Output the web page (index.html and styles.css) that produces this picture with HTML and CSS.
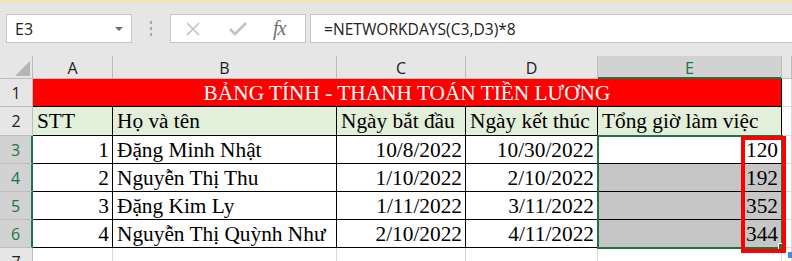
FILE: index.html
```html
<!DOCTYPE html>
<html lang="vi">
<head>
  <meta charset="UTF-8" />
  <title>Bảng tính</title>
  <link rel="stylesheet" href="styles.css">
</head>
<body>

  <div class="top-strip"></div>

  <div class="formula-bar">
    <div class="name-box">
      <span>E3</span>
      <span class="drop"></span>
    </div>
    <div class="grip"><i></i><i></i><i></i></div>
    <div class="fx-buttons">
      <svg class="ico-x" width="16" height="16" viewBox="0 0 16 16">
        <path d="M2 2 L14 14 M14 2 L2 14" stroke="#c2c2c2" stroke-width="1.6" fill="none"/>
      </svg>
      <svg class="ico-ok" width="18" height="14" viewBox="0 0 18 14">
        <path d="M1 7 L6 12 L17 1" stroke="#c2c2c2" stroke-width="2.8" fill="none"/>
      </svg>
      <span class="fx">fx</span>
    </div>
    <div class="formula-input">=NETWORKDAYS(C3,D3)*8</div>
  </div>

  <div class="sheet">
    <!-- column headers -->
    <div class="corner"><svg width="33" height="23" viewBox="0 0 33 23"><path d="M15 20 L30 20 L30 5 Z" fill="#b5b5b5"/></svg></div>
    <div class="col-head">A</div>
    <div class="col-head">B</div>
    <div class="col-head">C</div>
    <div class="col-head">D</div>
    <div class="col-head active">E</div>
    <div class="col-head"></div>

    <!-- row 1 -->
    <div class="row-head">1</div>
    <div class="cell title">BẢNG TÍNH - THANH TOÁN TIỀN LƯƠNG</div>
    <div class="cell empty"></div>

    <!-- row 2 -->
    <div class="row-head">2</div>
    <div class="cell head-cell">STT</div>
    <div class="cell head-cell">Họ và tên</div>
    <div class="cell head-cell">Ngày bắt đầu</div>
    <div class="cell head-cell">Ngày kết thúc</div>
    <div class="cell head-cell">Tổng giờ làm việc</div>
    <div class="cell empty"></div>

    <!-- row 3 -->
    <div class="row-head active">3</div>
    <div class="cell num">1</div>
    <div class="cell">Đặng Minh Nhật</div>
    <div class="cell num">10/8/2022</div>
    <div class="cell num">10/30/2022</div>
    <div class="cell num">120</div>
    <div class="cell empty"></div>

    <!-- row 4 -->
    <div class="row-head active">4</div>
    <div class="cell num">2</div>
    <div class="cell">Nguyễn Thị Thu</div>
    <div class="cell num">1/10/2022</div>
    <div class="cell num">2/10/2022</div>
    <div class="cell num sel">192</div>
    <div class="cell empty"></div>

    <!-- row 5 -->
    <div class="row-head active">5</div>
    <div class="cell num">3</div>
    <div class="cell">Đặng Kim Ly</div>
    <div class="cell num">1/11/2022</div>
    <div class="cell num">3/11/2022</div>
    <div class="cell num sel">352</div>
    <div class="cell empty"></div>

    <!-- row 6 -->
    <div class="row-head active">6</div>
    <div class="cell num">4</div>
    <div class="cell">Nguyễn Thị Quỳnh Như</div>
    <div class="cell num">2/10/2022</div>
    <div class="cell num">4/11/2022</div>
    <div class="cell num sel">344</div>
    <div class="cell empty"></div>

    <!-- row 7 -->
    <div class="row-head">7</div>
    <div class="cell empty"></div>
    <div class="cell empty"></div>
    <div class="cell empty"></div>
    <div class="cell empty"></div>
    <div class="cell empty"></div>
    <div class="cell empty"></div>

    <!-- selection + annotation -->
    <div class="selection"></div>
    <div class="fill-handle"></div>
    <div class="mark-box"></div>
    <div class="quick-tag"></div>
  </div>

</body>
</html>
```

FILE: styles.css
```css
body {
  margin: 0;
  background-color: #e6e6e6;
  font-family: "Open Sans", "Noto Sans", sans-serif;
  overflow: hidden;
}

.top-strip {
  height: 2px;
  background-color: #f2e8a6;
}

.formula-bar {
  display: flex;
  align-items: center;
  height: 29px;
  padding: 12px 0 13px 6px;
}

.name-box,
.fx-buttons,
.formula-input {
  box-sizing: border-box;
  height: 29px;
  background-color: white;
  border: 1px solid #c6c6c6;
  display: flex;
  align-items: center;
}

.name-box {
  width: 126px;
  padding-left: 8px;
  font-size: 16px;
  color: #222;
  justify-content: space-between;
}

.drop {
  width: 0;
  height: 0;
  margin-right: 8px;
  border-left: 4px solid transparent;
  border-right: 4px solid transparent;
  border-top: 4px solid #6d6d6d;
}

.grip {
  width: 38px;
  display: flex;
  flex-direction: column;
  align-items: center;
  gap: 3px;
}

.grip i {
  display: block;
  width: 2px;
  height: 3px;
  background-color: #a8a8a8;
}

.fx-buttons {
  width: 136px;
  padding-left: 14px;
}

.ico-x { margin-right: 28px; }
.ico-ok { margin-right: 26px; }

.fx {
  font-family: "Liberation Serif", serif;
  font-style: italic;
  font-size: 20px;
  color: #6f6f6f;
  letter-spacing: -1px;
}

.formula-input {
  flex: 1;
  margin-left: 4px;
  border-right: none;
  padding-left: 13px;
  font-size: 15.6px;
  color: #222;
}

.sheet {
  position: relative;
  display: grid;
  grid-template-columns: 33px 80px 224px 129px 132px 184px 1fr;
  grid-template-rows: 23px 28px 29px 28px 28px 28px 28px 28px;
  background-color: white;
}

.corner,
.col-head,
.row-head {
  box-sizing: border-box;
  background-color: #e6e6e6;
  border-right: 1px solid #bdbdbd;
  border-bottom: 1px solid #bdbdbd;
  font-size: 16px;
  color: #222;
  text-align: center;
}

.corner svg { display: block; }

.col-head { line-height: 24px; }

.col-head.active {
  background-color: #d2d2d2;
  border-bottom: 2px solid #217346;
  color: #217346;
}

.row-head { line-height: 28px; }

.row-head.active {
  background-color: #d2d2d2;
  border-right: 2px solid #217346;
  color: #217346;
}

.cell {
  box-sizing: border-box;
  border-right: 1px solid black;
  border-bottom: 1px solid black;
  padding: 0 4px;
  font-family: "Liberation Serif", "Times New Roman", serif;
  font-size: 21.33px;
  line-height: 28px;
  color: black;
  white-space: nowrap;
  overflow: hidden;
}

.cell.num { text-align: right; padding-right: 3px; }

.cell.empty { border-color: #d9d9d9; }

.title {
  grid-column: 2 / 7;
  background-color: #ff0000;
  color: white;
  text-align: center;
}

.head-cell { background-color: #e2efda; }

.cell.sel { background-color: #c6c6c6; }

.selection {
  position: absolute;
  left: 597px;
  top: 79px;
  width: 186px;
  height: 114px;
  box-sizing: border-box;
  border: 2px solid #217346;
}

.fill-handle {
  position: absolute;
  left: 779px;
  top: 188px;
  width: 6px;
  height: 6px;
  background-color: #217346;
  outline: 1px solid white;
}

.mark-box {
  position: absolute;
  left: 741px;
  top: 80px;
  width: 45px;
  height: 117px;
  box-sizing: border-box;
  border: 4px solid #ff0000;
}

.quick-tag {
  position: absolute;
  left: 788px;
  top: 196px;
  width: 4px;
  height: 6px;
  background-color: #4a86e8;
}
```
